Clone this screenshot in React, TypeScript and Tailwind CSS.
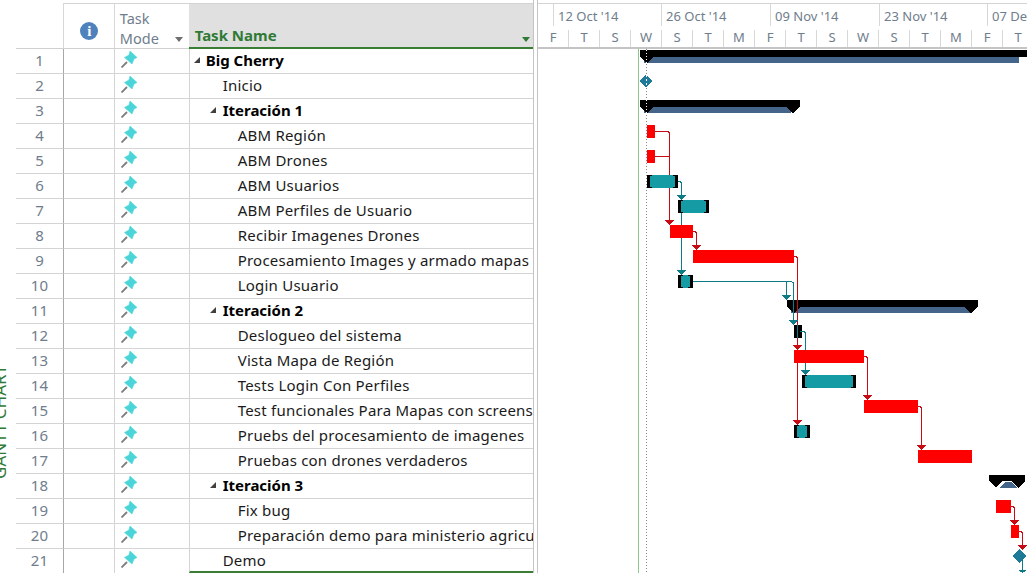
import React from "react";

type Row = { name: string; level: number; bold?: boolean };
const rows: Row[] = [
  { name: "Big Cherry", level: 0, bold: true },
  { name: "Inicio", level: 1 },
  { name: "Iteración 1", level: 1, bold: true },
  { name: "ABM Región", level: 2 },
  { name: "ABM Drones", level: 2 },
  { name: "ABM Usuarios", level: 2 },
  { name: "ABM Perfiles de Usuario", level: 2 },
  { name: "Recibir Imagenes Drones", level: 2 },
  { name: "Procesamiento Images y armado mapas", level: 2 },
  { name: "Login Usuario", level: 2 },
  { name: "Iteración 2", level: 1, bold: true },
  { name: "Deslogueo del sistema", level: 2 },
  { name: "Vista Mapa de Región", level: 2 },
  { name: "Tests Login Con Perfiles", level: 2 },
  { name: "Test funcionales Para Mapas con screenshots", level: 2 },
  { name: "Pruebs del procesamiento de imagenes", level: 2 },
  { name: "Pruebas con drones verdaderos", level: 2 },
  { name: "Iteración 3", level: 1, bold: true },
  { name: "Fix bug", level: 2 },
  { name: "Preparación demo para ministerio agricultura", level: 2 },
  { name: "Demo", level: 1 },
];

const days = ["F", "T", "S", "W", "S", "T", "M", "F", "T", "S", "W", "S", "T", "M", "F", "T"];
const months = [
  { label: "", w: 16 },
  { label: "12 Oct '14", w: 108 },
  { label: "26 Oct '14", w: 109 },
  { label: "09 Nov '14", w: 109 },
  { label: "23 Nov '14", w: 108 },
  { label: "07 Dec '14", w: 60 },
];

const Pin = () => (
  <svg width="16" height="17" viewBox="0 0 16 17" className="block">
    <path d="M0.5 16.5 L6 11" stroke="#7d7d7d" strokeWidth="1.8" fill="none" />
    <path d="M9 0 L16 6.5 L13 8 L11 13 L3.5 6.5 L8 4 Z" fill="#4bd5d8" stroke="#4bd5d8" strokeWidth="0.6" strokeLinejoin="round" />
  </svg>
);

const Caret = () => (
  <svg width="8" height="8" viewBox="0 0 8 8" className="block shrink-0">
    <path d="M7 1 L7 7 L1 7 Z" fill="#404040" />
  </svg>
);

const Red = "#ff0000";
const Link = "#c80a14";
const TealL = "#0e7c86";
const Teal = "#149ba3";

const Task = ({ x, y, w }: { x: number; y: number; w: number }) => (
  <g>
    <rect x={x} y={y} width={w} height={13} fill="#000" />
    <rect x={x + 3} y={y + 1} width={w - 6} height={11} fill={Teal} />
    <rect x={x + 5} y={y} width={w - 10} height={13} fill={Teal} />
  </g>
);

const Arrow = ({ x, y, c }: { x: number; y: number; c: string }) => (
  <path d={`M${x - 4.5} ${y - 5} H${x + 4.5} L${x} ${y} Z`} fill={c} />
);

const Summary = ({ x, y, w, blueEnd }: { x: number; y: number; w: number; blueEnd: number }) => (
  <g>
    <rect x={x + 4} y={y + 7} width={blueEnd - x - 4} height={6} fill="#44648a" />
    <path d={`M${x} ${y} H${x + w} V${y + 7} L${x + w - 7} ${y + 13} L${x + w - 14} ${y + 7} H${x + 14} L${x + 7} ${y + 13} L${x} ${y + 7} Z`} fill="#000" />
  </g>
);

const Diamond = ({ x, y, r }: { x: number; y: number; r: number }) => (
  <path d={`M${x - r} ${y} L${x} ${y - r} L${x + r} ${y} L${x} ${y + r} Z`} fill="#1f7a99" />
);

const Gantt = () => (
  <svg width="490" height="525" viewBox="537 48 490 525" className="absolute left-[-1px] top-[48px]" shapeRendering="crispEdges">
    <rect x="638" y="49" width="1" height="524" fill="#8cc98a" />
    <path d="M646.5 49 V573" stroke="#8a8a8a" strokeWidth="1" strokeDasharray="1 2" fill="none" />

    <rect x="644" y="57" width="375" height="6" fill="#44648a" />
    <path d="M640 50 H1027 V57 H654 L647 63 L640 57 Z" fill="#000" />
    <Diamond x={646} y={81} r={6.5} />
    <path d="M646.5 75 V88" stroke="#ffffff" strokeWidth="1" strokeDasharray="2 2" />
    <Summary x={640} y={100} w={160} blueEnd={791} />
    <path d="M646.5 50 V63 M646.5 100 V113" stroke="#ffffff" strokeWidth="1" strokeDasharray="1 2" />
    <Summary x={787} y={300} w={191} blueEnd={970} />
    <g>
      <path d="M1000 488 L1005 482 H1012 L1017 488 Z" fill="#44648a" />
      <path d="M989 475 H1025 V481 L1018 488 L1012 481 H1002 L996 488 L989 481 Z" fill="#000" />
    </g>

    <g fill="none" stroke={Link} strokeWidth="1">
      <path d="M655 131.5 H668 L669.5 133 V220" />
      <path d="M655 156.5 H669" />
      <path d="M693 231.5 H695 L696.5 233 V245" />
      <path d="M794 256.5 H796 L797.5 258 V420" />
      <path d="M864 356.5 H866 L867.5 358 V395" />
      <path d="M918 406.5 H920 L921.5 408 V445" />
      <path d="M1011 506.5 H1013 L1014.5 508 V520" />
      <path d="M1019 531.5 H1021 L1022.5 533 V545" />
    </g>
    <g fill="none" stroke={TealL} strokeWidth="1">
      <path d="M678 181.5 H680 L681.5 183 V270" />
      <path d="M693 281.5 H791 L793.5 283 V320" />
      <path d="M786.5 281.5 V295" />
      <path d="M800 331.5 H804 L805.5 333 V370" />
    </g>
    <Arrow x={669.5} y={225} c={Link} />
    <Arrow x={696.5} y={250} c={Link} />
    <Arrow x={797.5} y={350} c={Link} />
    <Arrow x={797.5} y={425} c={Link} />
    <Arrow x={867.5} y={400} c={Link} />
    <Arrow x={921.5} y={450} c={Link} />
    <Arrow x={1014.5} y={525} c={Link} />
    <Arrow x={1022.5} y={550} c={Link} />
    <Arrow x={681.5} y={200} c={TealL} />
    <Arrow x={681.5} y={275} c={TealL} />
    <Arrow x={786.5} y={300} c={TealL} />
    <Arrow x={793.5} y={325} c={TealL} />
    <Arrow x={805.5} y={375} c={TealL} />
    <path d="M1018 570 H1027 L1022.5 573 Z" fill={TealL} />

    <rect x="647" y="125" width="8" height="13" fill={Red} />
    <rect x="647" y="150" width="8" height="13" fill={Red} />
    <Task x={647} y={175} w={31} />
    <Task x={678} y={200} w={31} />
    <rect x="670" y="225" width="23" height="13" fill={Red} />
    <rect x="693" y="250" width="101" height="13" fill={Red} />
    <Task x={678} y={275} w={15} />
    <rect x="794" y="325" width="8" height="13" fill="#000" />
    <rect x="794" y="350" width="70" height="13" fill={Red} />
    <Task x={802} y={375} w={54} />
    <rect x="864" y="400" width="54" height="13" fill={Red} />
    <Task x={794} y={425} w={16} />
    <rect x="918" y="450" width="54" height="13" fill={Red} />
    <rect x="996" y="500" width="15" height="13" fill={Red} />
    <rect x="1011" y="525" width="8" height="13" fill={Red} />
    <Diamond x={1019} y={556} r={7} />
    <path d="M797.5 325 V338 M805 331.5 H800" stroke={TealL} strokeWidth="1" />
    <path d="M797.5 338 V350" stroke={Link} strokeWidth="1" />
    <path d="M797.5 363 V420" stroke={Link} strokeWidth="1" />
    <path d="M1022.5 556 V573" stroke={TealL} strokeWidth="1" />
  </svg>
);

export default function App() {
  return (
    <div className="relative w-[1027px] h-[573px] overflow-hidden bg-white font-['Noto_Sans','Open_Sans',sans-serif] text-[15px] leading-none text-[#1a1a1a]">
      <div className="absolute left-[-9px] top-[367px] h-[110px] flex items-center justify-center whitespace-nowrap [writing-mode:vertical-rl] rotate-180 text-[17px] font-normal text-[#2f7a34]">
        GANTT CHART
      </div>

      <div className="flex h-[573px] pl-4">
        {/* Table */}
        <div className="w-[517px] shrink-0 flex flex-col">
          <div className="h-[4px] shrink-0 ml-[47px] border-b border-[#d4d4d4]" />
          <div className="flex h-[45px] shrink-0 text-[#6f7d8c]">
            <div className="w-[47px] border-b border-[#d0d0d0]" />
            <div className="w-[51px] border-l border-[#d8d8d8] border-b border-b-[#d0d0d0] flex items-center justify-center pt-[10px]">
              <span className="flex size-[18px] rounded-full bg-[#4f81bd] items-center justify-center font-['Liberation_Serif',serif] font-bold text-[15px] text-white pl-[1px]">i</span>
            </div>
            <div className="relative w-[75px] border-l border-[#d8d8d8] border-b border-b-[#d0d0d0] pl-[5px] pt-[4px] leading-[20px] text-[14.5px]">
              <div>Task</div>
              <div>Mode</div>
              <span className="absolute right-[6px] bottom-[6px] w-0 h-0 border-x-[4.5px] border-x-transparent border-t-[5px] border-t-[#6e6e6e]" />
            </div>
            <div className="relative w-[345px] bg-[#e0e0e0] border-b-2 border-[#3a7d34] flex items-end pl-[6px] pb-[4px] font-bold text-[#2f7a34] text-[15px]">
              Task Name
              <span className="absolute right-[3px] bottom-[5px] w-0 h-0 border-x-[4.5px] border-x-transparent border-t-[5px] border-t-[#2f7a34]" />
            </div>
          </div>
          {rows.map((r, i) => {
            const last = i === rows.length - 1;
            return (
              <div key={i} className="flex h-[25px] shrink-0">
                <div className="w-[47px] border-b border-[#d4d4d4] flex items-center justify-center pb-[2px] text-[#6f7d8c]">{i + 1}</div>
                <div className="w-[51px] border-l border-l-[#a8a8a8] border-b border-[#d4d4d4]" />
                <div className="w-[75px] border-l border-b border-[#d4d4d4] flex items-center pl-[6px] pb-[4px]">
                  <Pin />
                </div>
                <div className={`relative w-[345px] border-l border-[#d4d4d4] flex items-center overflow-hidden whitespace-nowrap ${last ? "h-[24px] border-b-2 border-b-[#3a7d34]" : "border-b pb-[2px]"}`}>
                  {r.bold && (
                    <span className={`flex ${r.level === 0 ? "pl-[3px] w-[16px]" : "pl-[19px] w-[33px]"}`}>
                      <Caret />
                    </span>
                  )}
                  <span className={`${r.bold ? "font-bold text-black" : "tracking-[0.22px]"} ${!r.bold && r.level === 1 ? "pl-[33px]" : ""} ${r.level === 2 ? "pl-[48px]" : ""}`}>{r.name}</span>
                </div>
              </div>
            );
          })}
        </div>

        {/* Gantt */}
        <div className="w-[4px] shrink-0 border-l border-[#c4c4c4]" />
        <div className="relative flex-1 min-w-0 border-l border-[#c4c4c4] overflow-hidden">
          <div className="h-[4px] border-b border-[#d4d4d4]" />
          <div className="h-[45px] border-b-2 border-[#c4c4c4] text-[#6f7d8c] text-[13px] w-[600px]">
            <div className="flex h-[26px]">
              {months.map((m, i) => (
                <div key={i} style={{ width: m.w }} className="shrink-0 mb-[4px] border-r border-[#d8d8d8] flex items-center pl-[4px] whitespace-nowrap pt-[2px]">
                  {m.label}
                </div>
              ))}
            </div>
            <div className="flex h-[17px]">
              {days.map((d, i) => (
                <div key={i} className="w-[31px] shrink-0 border-r border-[#d8d8d8] flex items-center justify-center pb-[3px]">
                  {d}
                </div>
              ))}
            </div>
          </div>
          <Gantt />
        </div>
      </div>
    </div>
  );
}
